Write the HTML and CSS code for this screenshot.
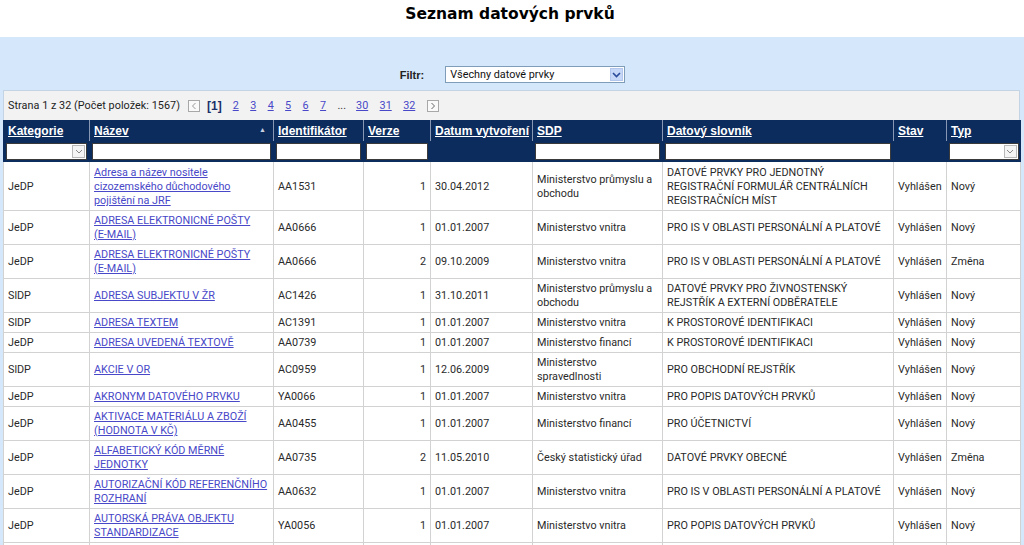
FILE: index.html
```html
<!DOCTYPE html>
<html lang="cs">
<head>
<meta charset="utf-8">
<title>Seznam datových prvků</title>
<link rel="stylesheet" href="styles.css">
</head>
<body>
<h1 class="title">Seznam datových prvků</h1>
<div class="band">
  <div class="filter">
    <span class="filter-label">Filtr:</span>
    <div class="select">
      <span class="select-text">Všechny datové prvky</span>
      <span class="select-btn"><svg width="9" height="6" viewBox="0 0 9 6"><path d="M1 1 L4.5 4.5 L8 1" fill="none" stroke="#2a4a9a" stroke-width="1.6"/></svg></span>
    </div>
  </div>
  <div class="pager">
    <span class="pager-info">Strana 1 z 32 (Počet položek: 1567)</span>
    <span class="pbtn"><svg width="6" height="8" viewBox="0 0 6 8"><path d="M4.5 1 L1.5 4 L4.5 7" fill="none" stroke="#999" stroke-width="1"/></svg></span>
    <span class="pcur">[1]</span>
    <a class="plink" href="#">2</a>
    <a class="plink" href="#">3</a>
    <a class="plink" href="#">4</a>
    <a class="plink" href="#">5</a>
    <a class="plink" href="#">6</a>
    <a class="plink" href="#">7</a>
    <span class="pdots">...</span>
    <a class="plink" href="#">30</a>
    <a class="plink" href="#">31</a>
    <a class="plink" href="#">32</a>
    <span class="pbtn"><svg width="6" height="8" viewBox="0 0 6 8"><path d="M1.5 1 L4.5 4 L1.5 7" fill="none" stroke="#666" stroke-width="1"/></svg></span>
  </div>
  <table class="grid">
    <colgroup>
      <col class="c-kat"><col class="c-naz"><col class="c-id"><col class="c-ver"><col class="c-dat"><col class="c-sdp"><col class="c-slov"><col class="c-stav"><col class="c-typ">
    </colgroup>
    <thead>
      <tr class="hrow">
        <th><a href="#">Kategorie</a></th>
        <th class="sorted"><a href="#">Název</a><span class="sort">▲</span></th>
        <th><a href="#">Identifikátor</a></th>
        <th><a href="#">Verze</a></th>
        <th><a href="#">Datum vytvoření</a></th>
        <th><a href="#">SDP</a></th>
        <th><a href="#">Datový slovník</a></th>
        <th><a href="#">Stav</a></th>
        <th><a href="#">Typ</a></th>
      </tr>
      <tr class="frow">
        <td><div class="fbox"><span class="fdrop"><svg width="8" height="5" viewBox="0 0 8 5"><path d="M1 1 L4 4 L7 1" fill="none" stroke="#888" stroke-width="1"/></svg></span></div></td>
        <td><div class="fbox"></div></td>
        <td><div class="fbox"></div></td>
        <td><div class="fbox"></div></td>
        <td></td>
        <td><div class="fbox"></div></td>
        <td><div class="fbox"></div></td>
        <td></td>
        <td><div class="fbox"><span class="fdrop"><svg width="8" height="5" viewBox="0 0 8 5"><path d="M1 1 L4 4 L7 1" fill="none" stroke="#888" stroke-width="1"/></svg></span></div></td>
      </tr>
    </thead>
    <tbody>
      <tr class="tall"><td>JeDP</td><td><a href="#">Adresa a název nositele<br>cizozemského důchodového<br>pojištění na JRF</a></td><td>AA1531</td><td class="num">1</td><td>30.04.2012</td><td>Ministerstvo průmyslu a<br>obchodu</td><td>DATOVÉ PRVKY PRO JEDNOTNÝ<br>REGISTRAČNÍ FORMULÁŘ CENTRÁLNÍCH<br>REGISTRAČNÍCH MÍST</td><td>Vyhlášen</td><td>Nový</td></tr>
      <tr><td>JeDP</td><td><a href="#">ADRESA ELEKTRONICNÉ POŠTY<br>(E-MAIL)</a></td><td>AA0666</td><td class="num">1</td><td>01.01.2007</td><td>Ministerstvo vnitra</td><td>PRO IS V OBLASTI PERSONÁLNÍ A PLATOVÉ</td><td>Vyhlášen</td><td>Nový</td></tr>
      <tr><td>JeDP</td><td><a href="#">ADRESA ELEKTRONICNÉ POŠTY<br>(E-MAIL)</a></td><td>AA0666</td><td class="num">2</td><td>09.10.2009</td><td>Ministerstvo vnitra</td><td>PRO IS V OBLASTI PERSONÁLNÍ A PLATOVÉ</td><td>Vyhlášen</td><td>Změna</td></tr>
      <tr><td>SlDP</td><td><a href="#">ADRESA SUBJEKTU V ŽR</a></td><td>AC1426</td><td class="num">1</td><td>31.10.2011</td><td>Ministerstvo průmyslu a<br>obchodu</td><td>DATOVÉ PRVKY PRO ŽIVNOSTENSKÝ<br>REJSTŘÍK A EXTERNÍ ODBĚRATELE</td><td>Vyhlášen</td><td>Nový</td></tr>
      <tr><td>SlDP</td><td><a href="#">ADRESA TEXTEM</a></td><td>AC1391</td><td class="num">1</td><td>01.01.2007</td><td>Ministerstvo vnitra</td><td>K PROSTOROVÉ IDENTIFIKACI</td><td>Vyhlášen</td><td>Nový</td></tr>
      <tr><td>JeDP</td><td><a href="#">ADRESA UVEDENÁ TEXTOVĚ</a></td><td>AA0739</td><td class="num">1</td><td>01.01.2007</td><td>Ministerstvo financí</td><td>K PROSTOROVÉ IDENTIFIKACI</td><td>Vyhlášen</td><td>Nový</td></tr>
      <tr><td>SlDP</td><td><a href="#">AKCIE V OR</a></td><td>AC0959</td><td class="num">1</td><td>12.06.2009</td><td>Ministerstvo<br>spravedlnosti</td><td>PRO OBCHODNÍ REJSTŘÍK</td><td>Vyhlášen</td><td>Nový</td></tr>
      <tr><td>JeDP</td><td><a href="#">AKRONYM DATOVÉHO PRVKU</a></td><td>YA0066</td><td class="num">1</td><td>01.01.2007</td><td>Ministerstvo vnitra</td><td>PRO POPIS DATOVÝCH PRVKŮ</td><td>Vyhlášen</td><td>Nový</td></tr>
      <tr><td>JeDP</td><td><a href="#">AKTIVACE MATERIÁLU A ZBOŽÍ<br>(HODNOTA V KČ)</a></td><td>AA0455</td><td class="num">1</td><td>01.01.2007</td><td>Ministerstvo financí</td><td>PRO ÚČETNICTVÍ</td><td>Vyhlášen</td><td>Nový</td></tr>
      <tr><td>JeDP</td><td><a href="#">ALFABETICKÝ KÓD MĚRNÉ<br>JEDNOTKY</a></td><td>AA0735</td><td class="num">2</td><td>11.05.2010</td><td>Český statistický úřad</td><td>DATOVÉ PRVKY OBECNÉ</td><td>Vyhlášen</td><td>Změna</td></tr>
      <tr><td>JeDP</td><td><a href="#">AUTORIZAČNÍ KÓD REFERENČNÍHO<br>ROZHRANÍ</a></td><td>AA0632</td><td class="num">1</td><td>01.01.2007</td><td>Ministerstvo vnitra</td><td>PRO IS V OBLASTI PERSONÁLNÍ A PLATOVÉ</td><td>Vyhlášen</td><td>Nový</td></tr>
      <tr><td>JeDP</td><td><a href="#">AUTORSKÁ PRÁVA OBJEKTU<br>STANDARDIZACE</a></td><td>YA0056</td><td class="num">1</td><td>01.01.2007</td><td>Ministerstvo vnitra</td><td>PRO POPIS DATOVÝCH PRVKŮ</td><td>Vyhlášen</td><td>Nový</td></tr>
      <tr><td>JeDP</td><td><a href="#">BANKOVNÍ SPOJENÍ SUBJEKTU<br>(ÚČET)</a></td><td>AA0812</td><td class="num">1</td><td>01.01.2007</td><td>Český statistický úřad</td><td>DATOVÉ PRVKY OBECNÉ</td><td>Vyhlášen</td><td>Nový</td></tr>
    </tbody>
  </table>
</div>
</body>
</html>
```

FILE: styles.css
```css
html, body {
  margin: 0;
  padding: 0;
  background: #ffffff;
}

body {
  font-family: Roboto, "Liberation Sans", Arial, sans-serif;
  font-size: 10.8px;
  color: #333;
  overflow: hidden;
}

.title {
  margin: 0;
  height: 37px;
  line-height: 28px;
  text-align: center;
  font-family: "DejaVu Sans", sans-serif;
  font-weight: bold;
  font-size: 15.5px;
  color: #000;
  padding-right: 4px;
}

.band {
  background: #d5e7fa;
  padding: 29px 4px 0 3px;
  min-height: 600px;
}

.filter {
  display: flex;
  justify-content: center;
  align-items: center;
  gap: 21px;
  height: 17px;
  padding-left: 2px;
}

.filter-label {
  font-family: "Liberation Sans", Arial, sans-serif;
  font-weight: bold;
  font-size: 11px;
  color: #222;
}

.select {
  width: 178px;
  height: 15px;
  border: 1px solid #7f9db9;
  background: #fff;
  display: flex;
  align-items: center;
  justify-content: space-between;
}

.select-text {
  padding-left: 4px;
  color: #111;
}

.select-btn {
  width: 13px;
  height: 13px;
  margin-right: 1px;
  background: #c6d7f7;
  border: 1px solid #b3c7ee;
  box-sizing: border-box;
  display: flex;
  align-items: center;
  justify-content: center;
}

.pager {
  margin-top: 7px;
  height: 29px;
  background: #f2f2f2;
  border: 1px solid #c4d4e4;
  border-bottom: none;
  display: flex;
  align-items: center;
  padding-left: 4px;
}

.pager-info {
  margin-right: 8px;
  color: #222;
  letter-spacing: 0.05px;
}

.pbtn {
  width: 12px;
  height: 12px;
  border: 1px solid #a8a8a8;
  background: #fafafa;
  box-sizing: border-box;
  display: inline-flex;
  align-items: center;
  justify-content: center;
}

.pcur {
  font-family: "Liberation Sans", Arial, sans-serif;
  font-weight: bold;
  font-size: 12px;
  color: #1a2f6a;
  margin: 0 11px 0 7px;
}

.plink {
  color: #4848c8;
  text-decoration: underline;
  margin-right: 11.4px;
}

.pdots {
  color: #333;
  margin-right: 10px;
}

.grid {
  width: 1017px;
  border-collapse: collapse;
  table-layout: fixed;
  background: #fff;
}

.c-kat { width: 86px; }
.c-naz { width: 184px; }
.c-id { width: 90px; }
.c-ver { width: 67px; }
.c-dat { width: 102px; }
.c-sdp { width: 130px; }
.c-slov { width: 231px; }
.c-stav { width: 53px; }
.c-typ { width: 74px; }

.hrow th {
  background: #0c2c5e;
  height: 21px;
  padding: 0 4px;
  text-align: left;
  font-family: "Liberation Sans", Arial, sans-serif;
  font-size: 12px;
  font-weight: bold;
  border-left: 1px solid #8797b4;
  border-bottom: 1px solid #0c2c5e;
  white-space: nowrap;
}

.hrow th:first-child {
  border-left: 1px solid #0c2c5e;
}

.hrow th a {
  color: #fff;
  text-decoration: underline;
}

.sorted {
  position: relative;
}

.sort {
  position: absolute;
  right: 7px;
  top: 6px;
  font-size: 7px;
  color: #c8d0e0;
}

.frow td {
  background: #0c2c5e;
  height: 19px;
  padding: 0 2px;
  border-left: 1px solid #0c2c5e;
  border-bottom: 1px solid #0c2c5e;
}

.fbox {
  height: 15px;
  background: #fff;
  border: 1px solid #3a3a3a;
  display: flex;
  justify-content: flex-end;
  align-items: center;
  padding-right: 1px;
}

.fdrop {
  width: 13px;
  height: 13px;
  box-sizing: border-box;
  border: 1px solid #b8b8b8;
  background: #f4f4f4;
  display: flex;
  align-items: center;
  justify-content: center;
}

tbody td {
  padding: 3px 3px 2px 4px;
  line-height: 14px;
  vertical-align: middle;
  border: 1px solid #d2d2d2;
  color: #2a2a2a;
  white-space: nowrap;
  overflow: hidden;
}

tbody tr.tall td {
  padding-top: 4px;
}

tbody td.num {
  text-align: right;
  padding-right: 4px;
}

tbody a {
  color: #4848c8;
  text-decoration: underline;
}
```
